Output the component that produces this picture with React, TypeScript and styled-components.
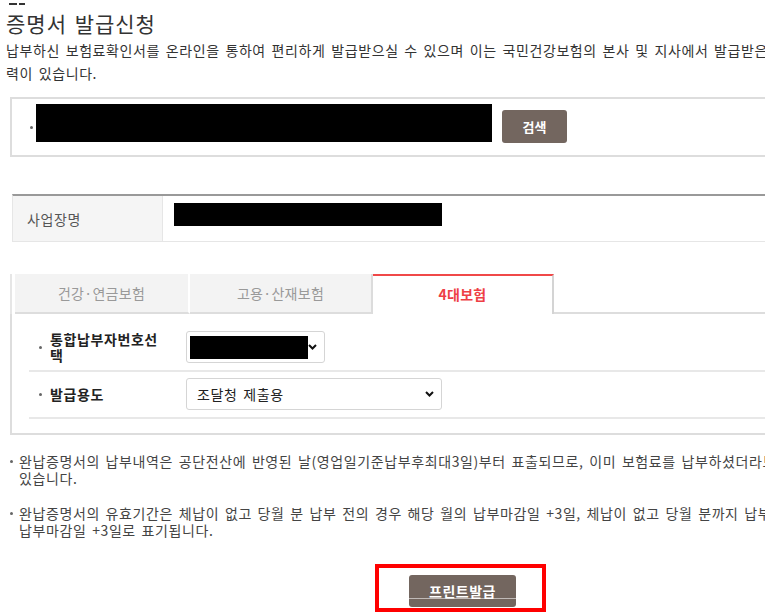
import React from 'react';
import styled, { createGlobalStyle } from 'styled-components';

const GlobalStyle = createGlobalStyle`
    html, body {
        margin: 0;
        padding: 0;
        background: #fff;
    }
    body {
        overflow: hidden;
        font-family: "Noto Sans CJK KR", "Noto Sans", sans-serif;
        color: #333;
        letter-spacing: 0.6px;
        word-spacing: 2px;
    }
`;

// 화면에 보이는 영역 (페이지 오른쪽은 잘려 보임)
const Viewport = styled.div`
    width: 765px;
    height: 614px;
    overflow: hidden;
`;

const Page = styled.div`
    width: 905px;
    padding-left: 10px;
    display: flex;
    flex-direction: column;
`;

const TopMark = styled.div`
    display: flex;
    gap: 2px;
    margin: 3px 0 0 -1px;
    height: 2px;
`;

const Dash = styled.span<{ $w: number }>`
    width: ${({ $w }) => $w}px;
    height: 2px;
    background: #333;
`;

const Title = styled.h2`
    margin: 4px 0 0 -4px;
    font-size: 21px;
    line-height: 28px;
    font-weight: 400;
    letter-spacing: 1px;
    color: #333;
`;

const Description = styled.p`
    margin: 2px 0 0 -4px;
    font-size: 14px;
    line-height: 23px;
    color: #333;
    white-space: nowrap;
`;

const SearchBox = styled.div`
    margin-top: 12px;
    border: 2px solid #ddd;
    display: flex;
    align-items: flex-start;
    padding: 5px 0 12px 18px;
`;

const Bullet = styled.span<{ $top?: number }>`
    flex-shrink: 0;
    width: 3px;
    height: 3px;
    border-radius: 50%;
    background: #666;
    margin-top: ${({ $top }) => $top ?? 0}px;
`;

const Redacted = styled.div<{ $w: number; $h: number }>`
    flex-shrink: 0;
    width: ${({ $w }) => $w}px;
    height: ${({ $h }) => $h}px;
    background: #000;
`;

const SearchButton = styled.button`
    margin: 6px 0 0 10px;
    width: 65px;
    height: 33px;
    padding: 0;
    border: none;
    border-radius: 3px;
    background: #73665f;
    color: #fff;
    font-family: inherit;
    font-size: 13px;
    font-weight: 700;
`;

const InfoTable = styled.div`
    margin: 37px 0 0 2px;
    display: flex;
    height: 45px;
    border-top: 2px solid #999;
    border-bottom: 1px solid #e6e6e6;
    border-left: 1px solid #e6e6e6;
`;

const HeadCell = styled.div`
    box-sizing: border-box;
    width: 150px;
    padding-left: 14px;
    display: flex;
    align-items: center;
    background: #f5f5f5;
    border-right: 1px solid #e6e6e6;
    font-size: 14px;
    color: #555;
`;

const ValueCell = styled.div`
    flex: 1;
    padding: 7px 0 0 11px;
`;

const TabRow = styled.div`
    margin-top: 32px;
    display: flex;
    height: 40px;
    border-left: 2px solid #e6e6e6;
    padding-left: 3px;
`;

const Tab = styled.div<{ $active?: boolean; $w: number; $edge: string }>`
    box-sizing: border-box;
    width: ${({ $w }) => $w}px;
    display: flex;
    align-items: center;
    justify-content: center;
    font-size: 14px;
    letter-spacing: 0.3px;
    border-right: 2px solid ${({ $edge }) => $edge};
    background: ${({ $active }) => ($active ? '#fff' : '#f3f3f3')};
    color: ${({ $active }) => ($active ? '#ee3f45' : '#999')};
    font-weight: ${({ $active }) => ($active ? 700 : 400)};
    border-top: ${({ $active }) => ($active ? '2px solid #f04848' : 'none')};
    border-bottom: ${({ $active }) => ($active ? 'none' : '2px solid #ddd')};
    padding-bottom: ${({ $active }) => ($active ? '3px' : '0')};
`;

const TabFill = styled.div`
    flex: 1;
    border-bottom: 2px solid #ddd;
`;

const Panel = styled.div`
    border-left: 2px solid #ddd;
    border-bottom: 2px solid #ddd;
    padding: 11px 0 14px 17px;
`;

const FormRow = styled.div`
    display: flex;
    align-items: center;
    padding: 6px 0 7px;
    border-bottom: 2px solid #e8e8e8;
`;

const Label = styled.div`
    width: 157px;
    display: flex;
    align-items: center;
    font-size: 14px;
    font-weight: 700;
    line-height: 16px;
    color: #222;
`;

const LabelDot = styled(Bullet)`
    margin: 0 8px 0 10px;
`;

const LabelText = styled.span`
    width: 110px;
`;

const SelectBox = styled.div<{ $w: number; $pad: number }>`
    box-sizing: border-box;
    width: ${({ $w }) => $w}px;
    height: 32px;
    padding: 0 7px 0 ${({ $pad }) => $pad}px;
    display: flex;
    align-items: center;
    justify-content: space-between;
    border: 1px solid #d5d5d5;
    border-radius: 3px;
    font-size: 14px;
    color: #222;
`;

const NoteList = styled.div`
    margin-top: 18px;
    display: flex;
    flex-direction: column;
    gap: 18px;
`;

const NoteItem = styled.div`
    display: flex;
    align-items: flex-start;
    font-size: 14px;
    line-height: 17px;
    color: #444;
    white-space: nowrap;
`;

const NoteDot = styled(Bullet)`
    margin: 7px 6px 0 0;
`;

const ButtonArea = styled.div`
    margin-top: 36px;
    display: flex;
    justify-content: center;
`;

const PrintWrap = styled.div`
    position: relative;
`;

const PrintButton = styled.button`
    position: relative;
    width: 107px;
    height: 32px;
    padding: 0;
    border: none;
    border-radius: 3px;
    background: #73665f;
    color: #fff;
    font-family: inherit;
    font-size: 14px;
    font-weight: 700;
    letter-spacing: 0.5px;

    &::after {
        content: '';
        position: absolute;
        left: 0;
        right: 0;
        top: 23px;
        height: 1px;
        background: rgba(255, 255, 255, 0.55);
    }
`;

// 캡처 위에 그려진 빨간 강조 박스
const Highlight = styled.div`
    position: absolute;
    left: -34px;
    top: -11px;
    width: 171px;
    height: 48px;
    box-sizing: border-box;
    border: 4px solid #ff0000;
    pointer-events: none;
`;

const Chevron = () => (
    <svg width="9" height="6" viewBox="0 0 9 6">
        <path d="M1 1l3.5 3.5L8 1" fill="none" stroke="#111" strokeWidth="2" />
    </svg>
);

const App: React.FC = () => {
    return (
        <>
            <GlobalStyle />
            <Viewport>
                <Page>
                    <TopMark>
                        <Dash $w={8} />
                        <Dash $w={6} />
                    </TopMark>
                    <Title>증명서 발급신청</Title>
                    <Description>
                        납부하신 보험료확인서를 온라인을 통하여 편리하게 발급받으실 수 있으며 이는 국민건강보험의 본사 및 지사에서 발급받은 증명서와 동일한 효
                        <br />
                        력이 있습니다.
                    </Description>

                    <SearchBox>
                        <Bullet $top={22} />
                        <Redacted $w={456} $h={38} style={{ marginLeft: 3 }} />
                        <SearchButton>검색</SearchButton>
                    </SearchBox>

                    <InfoTable>
                        <HeadCell>사업장명</HeadCell>
                        <ValueCell>
                            <Redacted $w={268} $h={23} />
                        </ValueCell>
                    </InfoTable>

                    <TabRow>
                        <Tab $w={175} $edge="#fff">건강·연금보험</Tab>
                        <Tab $w={183} $edge="#dcdcdc">고용·산재보험</Tab>
                        <Tab $w={181} $edge="#d4d4d4" $active>4대보험</Tab>
                        <TabFill />
                    </TabRow>
                    <Panel>
                        <FormRow>
                            <Label>
                                <LabelDot />
                                <LabelText>통합납부자번호선택</LabelText>
                            </Label>
                            <SelectBox $w={139} $pad={3}>
                                <Redacted $w={118} $h={23} />
                                <Chevron />
                            </SelectBox>
                        </FormRow>
                        <FormRow>
                            <Label>
                                <LabelDot />
                                <LabelText>발급용도</LabelText>
                            </Label>
                            <SelectBox $w={256} $pad={10}>
                                <span>조달청 제출용</span>
                                <Chevron />
                            </SelectBox>
                        </FormRow>
                    </Panel>

                    <NoteList>
                        <NoteItem>
                            <NoteDot />
                            <span>
                                완납증명서의 납부내역은 공단전산에 반영된 날(영업일기준납부후최대3일)부터 표출되므로, 이미 보험료를 납부하셨더라도 조회되지 않을 수
                                <br />
                                있습니다.
                            </span>
                        </NoteItem>
                        <NoteItem>
                            <NoteDot />
                            <span>
                                완납증명서의 유효기간은 체납이 없고 당월 분 납부 전의 경우 해당 월의 납부마감일 +3일, 체납이 없고 당월 분까지 납부한 경우 익월의
                                <br />
                                납부마감일 +3일로 표기됩니다.
                            </span>
                        </NoteItem>
                    </NoteList>

                    <ButtonArea>
                        <PrintWrap>
                            <PrintButton>프린트발급</PrintButton>
                            <Highlight />
                        </PrintWrap>
                    </ButtonArea>
                </Page>
            </Viewport>
        </>
    );
};

export default App;
